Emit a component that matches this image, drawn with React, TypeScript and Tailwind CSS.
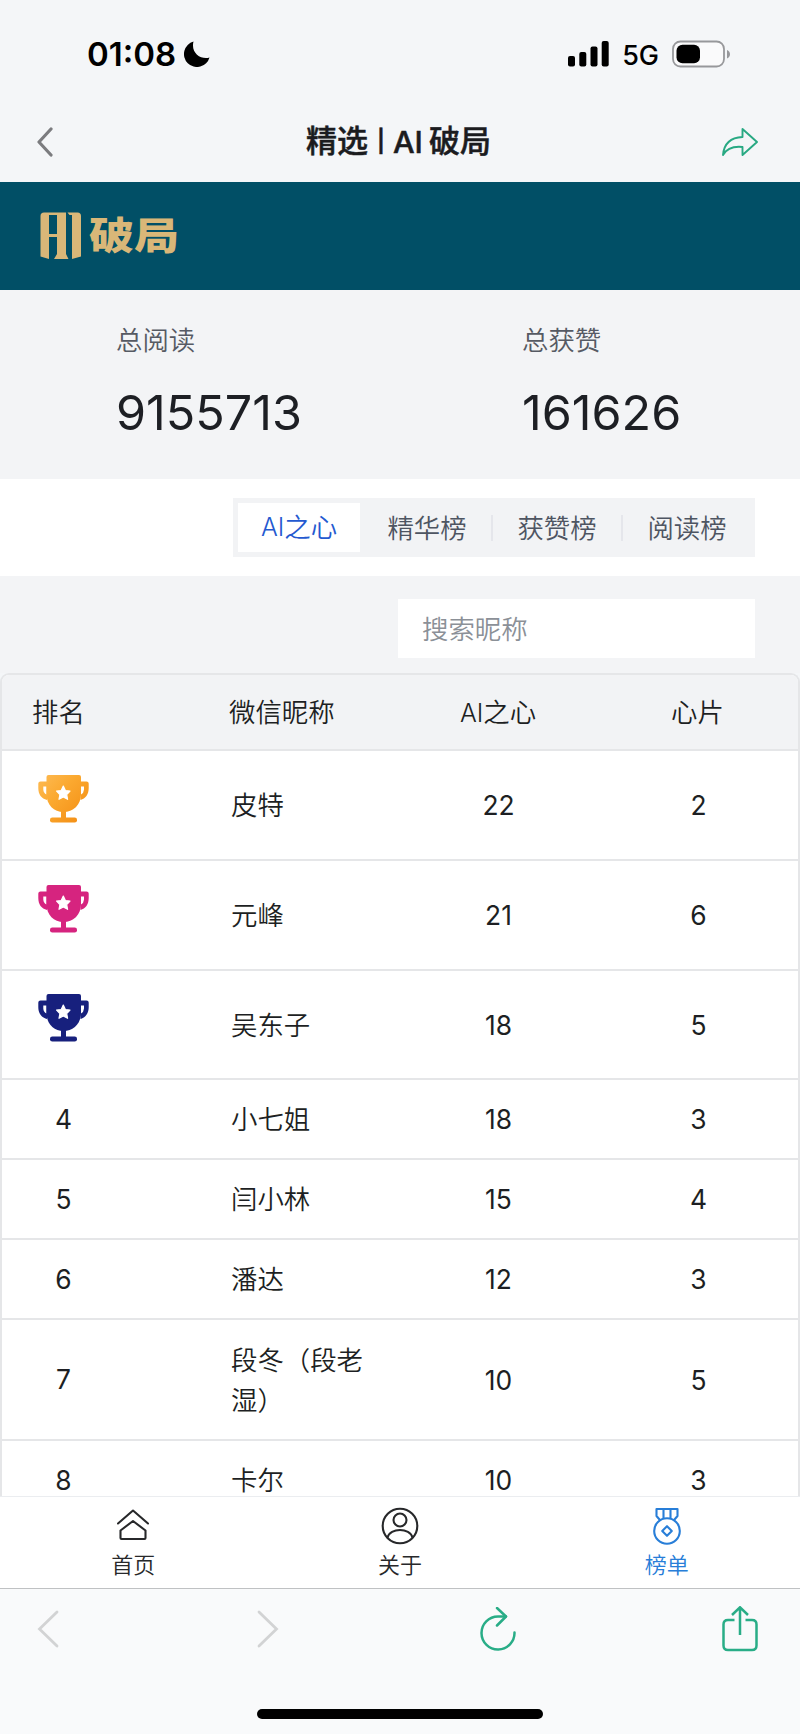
import { ReactNode } from "react";

type Row = {
  rank: number;
  name: string;
  hearts: number;
  chips: number;
  height: string;
};

const rows: Row[] = [
  { rank: 1, name: "皮特", hearts: 22, chips: 2, height: "h-[110px]" },
  { rank: 2, name: "元峰", hearts: 21, chips: 6, height: "h-[110px]" },
  { rank: 3, name: "吴东子", hearts: 18, chips: 5, height: "h-[109px]" },
  { rank: 4, name: "小七姐", hearts: 18, chips: 3, height: "h-[80px]" },
  { rank: 5, name: "闫小林", hearts: 15, chips: 4, height: "h-[80px]" },
  { rank: 6, name: "潘达", hearts: 12, chips: 3, height: "h-[80px]" },
  { rank: 7, name: "段冬（段老湿）", hearts: 10, chips: 5, height: "h-[121px]" },
  { rank: 8, name: "卡尔", hearts: 10, chips: 3, height: "h-[80px]" },
];

const trophyColors = ["url(#gold)", "#d6247f", "#17207d"];

function StatusBar() {
  return (
    <div className="flex h-[108px] items-center pl-[87px] pr-[69px]">
      <span className="text-[33px] leading-none font-semibold text-black">01:08</span>
      <svg className="ml-2 h-[26px] w-[26px]" viewBox="0 0 26 26">
        <path d="M9.5 0.5A13 13 0 1 0 25.5 16.5C17 19 6.500 12 9.500 0.500Z" fill="#000" />
      </svg>
      <svg className="ml-auto h-[26px] w-[42px]" viewBox="0 0 42 26">
        <rect x="0" y="15" width="7" height="10.500" rx="2" />
        <rect x="11.300" y="11" width="7" height="14.500" rx="2" />
        <rect x="22.500" y="5.500" width="7" height="20" rx="2" />
        <rect x="33.700" y="0" width="7" height="25.500" rx="2" />
      </svg>
      <span className="ml-3 pt-0.5 text-[27px] leading-none font-medium text-black">5G</span>
      <svg className="ml-[13px] h-[28px] w-[59px]" viewBox="0 0 59 28">
        <rect x="1" y="1.500" width="51" height="25" rx="7.500" fill="#fafafb" stroke="#97989b" strokeWidth="1.800" />
        <rect x="4.500" y="4.800" width="23.500" height="18.400" rx="6" />
        <path d="M55 10V18.500C59 17 59 11.500 55 10Z" fill="#97989b" />
      </svg>
    </div>
  );
}

function TitleBar() {
  return (
    <div className="flex h-[74px] items-center justify-between pr-[42px] pb-[7px] pl-[37px]">
      <svg className="h-[30px] w-[36px]" viewBox="0 0 36 30" fill="none" stroke="#7b7c7f" strokeWidth="3.200" strokeLinecap="round" strokeLinejoin="round">
        <path d="M14 2L2 15L14 28" />
      </svg>
      <h1 className="flex items-center pl-0.5 text-[31px] font-medium text-[#1b1c1f] [-webkit-text-stroke:0.5px_#1b1c1f]">
        精选
        <span className="mr-[8px] ml-[9px] text-[22px] font-semibold">|</span>
        <span className="mr-[6px] text-[30.500px]">AI</span>
        破局
      </h1>
      <svg className="h-[28px] w-[36px]" viewBox="0 0 36 28" fill="none" stroke="#28a983" strokeWidth="1.900" strokeLinejoin="round">
        <path d="M20.500 1L35 14L20.500 27V19C11 18 5 20 1 27C2 15.500 9 9.500 20.500 9Z" />
      </svg>
    </div>
  );
}

function Banner() {
  return (
    <div className="flex h-[108px] items-center bg-[#014f66] pb-px pl-[40px]">
      <svg className="h-[48px] w-[42px]" viewBox="0 0 42 48" fill="#d9b778">
        <path fillRule="evenodd" d="M4 0.500H26V42L28.500 47H14L17 42V25H9V47L0.500 44.500V4Q0.500 0.500 4 0.500ZM9 3V22H17V3Z" />
        <path d="M27.500 0.500H37.500Q41 0.500 41 4V44.500L32 47V3H29.500Z" />
      </svg>
      <span className="ml-[7px] origin-left scale-x-[1.2] text-[37.500px] leading-none font-black text-[#d9b778]">破局</span>
    </div>
  );
}

function Stat({ label, value }: { label: string; value: string }) {
  return (
    <div className="w-[406px] shrink-0 pt-[30px] pl-[116px]">
      <p className="text-[26.400px] leading-[40px] font-[350] text-[#565a63]">{label}</p>
      <p className="mt-[25px] text-[48.500px] leading-[56px] text-[#1d1f24]">{value}</p>
    </div>
  );
}

function Tabs() {
  return (
    <div className="flex h-[97px] items-center justify-end bg-white pr-[45px]">
      <div className="flex h-[59px] w-[522px] items-center bg-[#f2f3f5] pl-[5px] text-[26.400px] font-[350] text-[#4e5562]">
        <div className="flex h-[49px] w-[122px] items-center justify-center bg-white text-[#2459d0]">
          <span className="text-[25px]">AI</span>之心
        </div>
        <div className="w-[133px] border-r-2 border-[#e5e6eb] pl-[3px] text-center leading-[26px]">精华榜</div>
        <div className="w-[130px] border-r-2 border-[#e5e6eb] text-center leading-[26px]">获赞榜</div>
        <div className="w-[128px] text-center leading-[26px]">阅读榜</div>
      </div>
    </div>
  );
}

function Trophy({ fill }: { fill: string }) {
  return (
    <svg className="h-[48px] w-[51px]" viewBox="0 0 51 48">
      <defs>
        <linearGradient id="gold" x1="0" y1="0" x2="51" y2="48" gradientUnits="userSpaceOnUse">
          <stop offset="0" stopColor="#fdbb55" />
          <stop offset="0.400" stopColor="#fba930" />
          <stop offset="1" stopColor="#f28a10" />
        </linearGradient>
      </defs>
      <g fill={fill}>
        <path d="M10.500 0H41Q43 0 43 2V19C43 30 35 37 25.500 37S8.500 30 8.500 19V2Q8.500 0 10.500 0Z" />
        <rect x="23" y="34" width="5" height="11" />
        <rect x="12" y="42.500" width="27" height="5" rx="2.300" />
        <path fillRule="evenodd" d="M2.500 6.500H9V25C3.500 23.500 0.300 19.500 0.300 13V8.500Q0.300 6.500 2.500 6.500ZM5.300 11.500V14.500Q5.500 18 8.500 19.500V11.500Z" />
        <path fillRule="evenodd" d="M48.500 6.500H42.500V25C47.500 23.500 50.700 19.500 50.700 13V8.500Q50.700 6.500 48.500 6.500ZM46 11.500V14.500Q45.800 18 43 19.500V11.500Z" />
      </g>
      <path d="M25.300 11L27.400 15.500L32 16L28.700 19.500L29.600 24.300L25.300 22L21 24.300L21.900 19.500L18.600 16L23.200 15.500Z" fill="#fff" stroke="#fff" strokeWidth="1.200" strokeLinejoin="round" />
    </svg>
  );
}

function RankTable() {
  return (
    <div className="h-[823px] overflow-hidden rounded-t-[9px] border-x-2 border-t-2 border-[#e5e6e8] bg-white text-[26.400px] text-[#1d1f23]">
      <div className="grid h-[76px] grid-cols-4 items-center border-b-2 border-[#e5e6e8] bg-[#f2f3f5] pt-0.5 font-[350]">
        <span className="pl-[30px]">排名</span>
        <span className="pl-[28px]">微信昵称</span>
        <span className="pr-[3px] text-center">
          <span className="text-[25px]">AI</span>之心
        </span>
        <span className="pr-[2px] text-center">心片</span>
      </div>
      {rows.map((row) => (
        <div key={row.rank} className={`grid grid-cols-4 items-center border-b-2 border-[#e5e6e8] pt-px ${row.height}`}>
          <span className="flex w-[123px] justify-center">
            {row.rank <= 3 ? (
              <span className="pb-3.5">
                <Trophy fill={trophyColors[row.rank - 1]} />
              </span>
            ) : (
              row.rank
            )}
          </span>
          <span className="pr-[29px] pl-[30px] leading-[40.500px] font-[350]">{row.name}</span>
          <span className="pt-px pr-[2px] text-center">{row.hearts}</span>
          <span className="pt-px text-center">{row.chips}</span>
        </div>
      ))}
    </div>
  );
}

function NavItem({ label, active, children }: { label: string; active?: boolean; children: ReactNode }) {
  return (
    <div className={`flex flex-1 flex-col items-center pt-[10px] ${active ? "text-[#287ed8]" : "text-[#27282a]"}`}>
      <svg className="h-[38px] w-[38px]" viewBox="0 0 38 38" fill="none" stroke="currentColor" strokeWidth="2.100" strokeLinejoin="round" strokeLinecap="round">
        {children}
      </svg>
      <span className="mt-1 text-[22px] leading-[32px] font-[350]">{label}</span>
    </div>
  );
}

function BottomNav() {
  return (
    <div className="flex h-[93px] border-t border-b border-t-[#ebedf0] border-b-[#bfc1c3] bg-white">
      <NavItem label="首页">
        <path d="M4 16.500L19 3.500L34 16.500" />
        <path d="M6.500 31V23.500L19 14L31.500 23.500V31Q31.500 32 30.500 32H7.500Q6.500 32 6.500 31Z" />
      </NavItem>
      <NavItem label="关于">
        <circle cx="19" cy="19" r="17.300" />
        <circle cx="19" cy="13" r="6.500" />
        <path d="M6.500 30.500C9 20.500 29 20.500 31.500 30.500" />
      </NavItem>
      <NavItem label="榜单" active>
        <circle cx="19" cy="24" r="12.800" />
        <path d="M11.500 12.500L8.500 9V2H29.500V9L26.500 12.500M15.500 2V11M22.500 2V11" />
        <path d="M19 19.200L23.800 24L19 28.800L14.200 24Z" />
      </NavItem>
    </div>
  );
}

function BrowserBar() {
  return (
    <div className="flex h-[145px] flex-col items-center bg-[#f9fafb]">
      <div className="flex h-[80px] w-full items-center pl-[37px]">
        <svg className="h-[38px] w-[22px]" viewBox="0 0 22 38" fill="none" stroke="#d2d3d4" strokeWidth="2.800" strokeLinecap="round">
          <path d="M20 2L2.500 19L20 36" />
        </svg>
        <svg className="ml-[198px] h-[38px] w-[22px]" viewBox="0 0 22 38" fill="none" stroke="#d2d3d4" strokeWidth="2.800" strokeLinecap="round">
          <path d="M2 2L19.500 19L2 36" />
        </svg>
        <svg className="ml-[201px] h-[44px] w-[36px]" viewBox="0 0 36 44" fill="none" stroke="#29ad87" strokeWidth="2.500" strokeLinecap="round" strokeLinejoin="round">
          <path d="M34.500 25.500A16.500 16.500 0 1 1 18 9.500H26" />
          <path d="M17 1L26 9.500L17 18.500" />
        </svg>
        <svg className="ml-[206px] h-[46px] w-[36px]" viewBox="0 0 36 46" fill="none" stroke="#29ad87" strokeWidth="2.500">
          <path d="M12.500 14H6Q1.500 14 1.500 18.500V39.500Q1.500 44 6 44H30Q34.500 44 34.500 39.500V18.500Q34.500 14 30 14H23.500" />
          <path d="M18 29V1.500M10 9L18 1.300L26 9" />
        </svg>
      </div>
      <div className="mt-[40px] h-[10px] w-[286px] rounded-full bg-black" />
    </div>
  );
}

export default function App() {
  return (
    <div className="h-[1734px] w-[800px] overflow-hidden bg-[#f4f6f8] font-['Inter','Noto_Sans_CJK_SC',sans-serif]">
      <StatusBar />
      <TitleBar />
      <Banner />
      <div className="flex h-[189px] bg-[#f3f4f6]">
        <Stat label="总阅读" value="9155713" />
        <Stat label="总获赞" value="161626" />
      </div>
      <Tabs />
      <div className="flex h-[97px] items-start justify-end bg-[#f3f4f6] pt-[23px] pr-[45px]">
        <input
          placeholder="搜索昵称"
          className="h-[59px] w-[357px] bg-white pl-[24px] text-[26.400px] font-[350] outline-none placeholder:text-[#8b9097]"
        />
      </div>
      <RankTable />
      <BottomNav />
      <BrowserBar />
    </div>
  );
}
